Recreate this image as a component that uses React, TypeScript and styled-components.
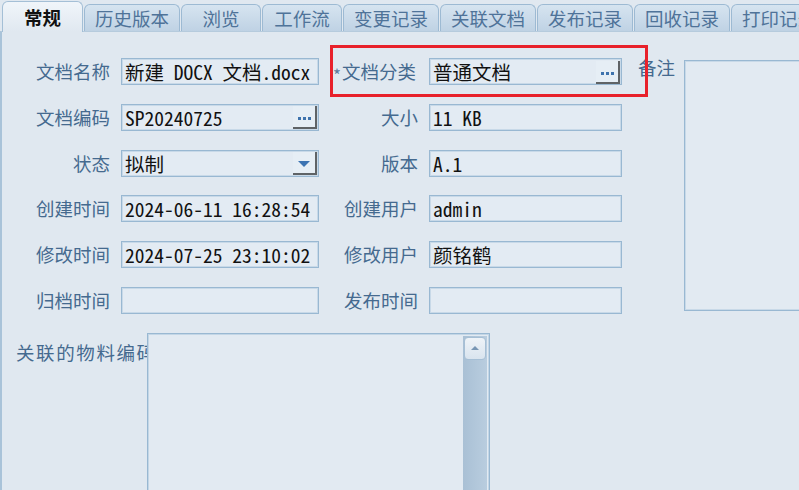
import React from 'react';
import styled, { createGlobalStyle, css } from 'styled-components';

const GlobalStyle = createGlobalStyle`
  html, body {
    margin: 0;
    padding: 0;
    background: #e0e8f0;
    overflow: hidden;
  }
  * {
    box-sizing: border-box;
  }
`;

const Window = styled.div`
  position: relative;
  width: 799px;
  height: 490px;
  overflow: hidden;
  background: #e0e8f0;
  font-family: 'Noto Sans CJK SC', 'Noto Sans', sans-serif;
`;

const TabBar = styled.div`
  display: flex;
  align-items: flex-end;
  height: 31px;
  padding-left: 2px;
  gap: 1px;
  position: relative;
  z-index: 1;
`;

const Tab = styled.div<{ $active?: boolean }>`
  flex: none;
  min-width: 80px;
  padding: 0 10px;
  height: 27px;
  display: flex;
  align-items: center;
  justify-content: center;
  font-size: 18.5px;
  line-height: 1;
  color: #4f7399;
  border: 1px solid #9dbad3;
  border-bottom: none;
  border-radius: 6px 6px 0 0;
  background: linear-gradient(#d6e4f0, #bfd2e4);

  ${(p) =>
    p.$active &&
    css`
      height: 31px;
      min-width: 81px;
      padding: 0 20px;
      color: #111;
      font-weight: 600;
      background: linear-gradient(#f0f5fa, #e0e8f0);
      border-color: #a4bfd6;
      margin-bottom: -1px;
    `}
`;

const Panel = styled.div`
  height: 459px;
  border-left: 2px solid #a9c3d9;
  border-top: 1px solid #b6cbdd;
  padding-top: 26px;
`;

const FormGrid = styled.div`
  display: grid;
  grid-template-columns: 119px 198px 110px 193px 62px 200px;
  grid-template-rows: repeat(6, 27px);
  row-gap: 18.8px;
  align-items: center;
`;

const Label = styled.div<{ $required?: boolean }>`
  display: flex;
  align-items: center;
  justify-content: flex-end;
  font-size: 18.5px;
  line-height: 27px;
  color: #456a8f;
  white-space: nowrap;
  padding-right: ${(p) => (p.$required ? '13px' : '11px')};
`;

const Star = styled.span`
  font-size: 17px;
  line-height: 1;
  margin-right: 1px;
  margin-top: 6px;
  color: #5d7c9c;
`;

const Field = styled.div`
  position: relative;
  height: 27px;
  border: 1px solid #99b8d2;
  box-shadow: inset 0 0 0 1px #c8d9e8;
  background: #e3ebf3;
  display: flex;
  align-items: center;
  overflow: hidden;
`;

const FieldText = styled.span`
  flex: 1;
  padding-left: 3px;
  font-family: 'Noto Sans Mono CJK SC', 'Liberation Mono', 'Noto Sans CJK SC', monospace;
  font-size: 19.5px;
  line-height: 25px;
  color: #111;
  white-space: nowrap;
  overflow: hidden;
`;

const FieldButton = styled.div`
  flex: none;
  width: 24px;
  height: 23px;
  margin-right: 1px;
  margin-top: 1px;
  display: flex;
  align-items: center;
  justify-content: center;
  background: #e6eef5;
  border-right: 2px solid #5f6366;
  border-bottom: 2px solid #5f6366;
  color: #3e73ad;
`;

const Dots = styled.span`
  display: flex;
  gap: 2px;
  margin-top: 4px;

  i {
    display: block;
    width: 3px;
    height: 3px;
    background: #3e73ad;
  }
`;

const Arrow = styled.span`
  width: 0;
  height: 0;
  border-left: 6px solid transparent;
  border-right: 6px solid transparent;
  border-top: 6px solid #3b73b2;
  margin-top: 2px;
`;

const RemarkLabel = styled.div`
  grid-column: 5;
  grid-row: 1 / span 6;
  align-self: start;
  padding-left: 16px;
  margin-top: -4px;
  font-size: 18.5px;
  color: #456a8f;
  white-space: nowrap;
`;

const RemarkBox = styled.div`
  grid-column: 6;
  grid-row: 1 / span 6;
  align-self: stretch;
  margin: 2px 0 3px 0;
  border: 1px solid #99b8d2;
  box-shadow: inset 0 0 0 1px #c8d9e8;
  background: #e2eaf2;
`;

const MaterialRow = styled.div`
  display: flex;
  align-items: flex-start;
  margin-top: 19px;
  padding-left: 14px;
`;

const MaterialLabel = styled.div`
  width: 131px;
  overflow: hidden;
  white-space: nowrap;
  font-size: 18.5px;
  letter-spacing: 1.6px;
  color: #456a8f;
  margin-top: 6px;
`;

const ListBox = styled.div`
  width: 343px;
  height: 170px;
  display: flex;
  border: 1px solid #99b8d2;
  box-shadow: inset 0 0 0 1px #c3d6e6;
  background: #e2eaf2;
  padding: 2px 2px 0 0;
`;

const ListContent = styled.div`
  flex: 1;
`;

const ScrollTrack = styled.div`
  width: 24px;
  background: linear-gradient(90deg, #a9c0d5, #b9cddf);
  display: flex;
  flex-direction: column;
  align-items: center;
`;

const ScrollButton = styled.div`
  width: 22px;
  height: 23px;
  margin-top: 1px;
  border: 1px solid #a6bfd5;
  border-radius: 4px;
  background: linear-gradient(#eef3f8, #d9e4ee);
  display: flex;
  align-items: center;
  justify-content: center;

  &::after {
    content: '';
    width: 0;
    height: 0;
    border-left: 4px solid transparent;
    border-right: 4px solid transparent;
    border-bottom: 4px solid #7896b4;
  }
`;

const Highlight = styled.div`
  position: absolute;
  left: 330px;
  top: 45px;
  width: 318px;
  height: 52px;
  border: 3px solid #e8212b;
  pointer-events: none;
`;

const tabs = ['常规', '历史版本', '浏览', '工作流', '变更记录', '关联文档', '发布记录', '回收记录', '打印记录'];

type FieldDef = {
  label: string;
  value?: string;
  kind?: 'text' | 'lookup' | 'select';
  required?: boolean;
};

const rows: [FieldDef, FieldDef][] = [
  [
    { label: '文档名称', value: '新建 DOCX 文档.docx' },
    { label: '文档分类', value: '普通文档', kind: 'lookup', required: true },
  ],
  [
    { label: '文档编码', value: 'SP20240725', kind: 'lookup' },
    { label: '大小', value: '11 KB' },
  ],
  [
    { label: '状态', value: '拟制', kind: 'select' },
    { label: '版本', value: 'A.1' },
  ],
  [
    { label: '创建时间', value: '2024-06-11 16:28:54' },
    { label: '创建用户', value: 'admin' },
  ],
  [
    { label: '修改时间', value: '2024-07-25 23:10:02' },
    { label: '修改用户', value: '颜铭鹤' },
  ],
  [
    { label: '归档时间', value: '' },
    { label: '发布时间', value: '' },
  ],
];

const FormField: React.FC<{ def: FieldDef }> = ({ def }) => (
  <>
    <Label $required={def.required}>
      {def.required && <Star>*</Star>}
      {def.label}
    </Label>
    <Field>
      <FieldText>{def.value}</FieldText>
      {def.kind === 'lookup' && (
        <FieldButton>
          <Dots>
            <i />
            <i />
            <i />
          </Dots>
        </FieldButton>
      )}
      {def.kind === 'select' && (
        <FieldButton>
          <Arrow />
        </FieldButton>
      )}
    </Field>
  </>
);

const App: React.FC = () => {
  return (
    <Window>
      <GlobalStyle />
      <TabBar>
        {tabs.map((t, i) => (
          <Tab key={t} $active={i === 0}>
            {t}
          </Tab>
        ))}
      </TabBar>
      <Panel>
        <FormGrid>
          {rows.map((pair, i) => (
            <React.Fragment key={i}>
              <FormField def={pair[0]} />
              <FormField def={pair[1]} />
            </React.Fragment>
          ))}
          <RemarkLabel>备注</RemarkLabel>
          <RemarkBox />
        </FormGrid>
        <MaterialRow>
          <MaterialLabel>关联的物料编码</MaterialLabel>
          <ListBox>
            <ListContent />
            <ScrollTrack>
              <ScrollButton />
            </ScrollTrack>
          </ListBox>
        </MaterialRow>
      </Panel>
      <Highlight />
    </Window>
  );
};

export default App;
